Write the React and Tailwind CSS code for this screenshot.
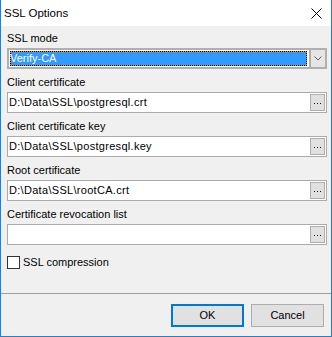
import React from "react";

function Ellipsis() {
  return (
    <div className="ml-auto mr-[1px] w-[15px] h-[17px] border border-[#adadad] bg-[#e1e1e1] flex items-center justify-center gap-[2px] pt-[1px]">
      <div className="w-[1px] h-[1px] bg-[#111]" />
      <div className="w-[1px] h-[1px] bg-[#111]" />
      <div className="w-[1px] h-[1px] bg-[#111]" />
    </div>
  );
}

function Field({ label, value }) {
  return (
    <div className="flex flex-col mt-[6px]">
      <div className="h-[15px] leading-[15px] text-black">{label}</div>
      <div className="mt-[2px] h-[21px] border border-[#ababab] bg-white flex items-center">
        <span className="pl-[1px] leading-[15px] text-black whitespace-pre tracking-[0.3px]">{value}</span>
        <Ellipsis />
      </div>
    </div>
  );
}

export default function App() {
  return (
    <div className="w-[332px] h-[337px] flex flex-col bg-[#f0f0f0] border-x border-b border-[#1883d7] font-['Liberation_Sans',Arial,sans-serif] text-[11px] text-black overflow-hidden">
      {/* Title bar */}
      <div className="h-[26px] bg-white flex items-center pl-[3px] pr-[9px] shrink-0">
        <span className="leading-[15px] text-[11.5px]">SSL Options</span>
        <svg className="ml-auto" width="11" height="11" viewBox="0 0 11 11">
          <path d="M0.5 0.5 L10.5 10.5 M10.5 0.5 L0.5 10.5" stroke="#000" strokeWidth="1" fill="none" />
        </svg>
      </div>

      {/* Body */}
      <div className="flex flex-col pl-[6px] pr-[4px] pt-[5px]">
        <div className="h-[15px] leading-[15px]">SSL mode</div>
        <div className="mt-[2px] h-[21px] border-2 border-[#b0b0b0] bg-white flex items-center">
          <div className="flex-1 ml-[1px] mr-[2px] h-[15px] bg-[#e08a2a]">
            <div className="h-full border border-dotted border-black bg-[#3399ff] bg-clip-padding flex items-center">
              <span className="text-white leading-[13px] -ml-[1px]">Verify-CA</span>
            </div>
          </div>
          <div className="w-[16px] h-full border-l-2 border-[#b0b0b0] bg-[#e6e6e6] flex items-center justify-center">
            <svg width="8" height="5" viewBox="0 0 8 5">
              <path d="M0.5 0.5 L4 4 L7.5 0.5" stroke="#606060" strokeWidth="1" fill="none" />
            </svg>
          </div>
        </div>

        <Field label="Client certificate" value="D:\Data\SSL\postgresql.crt" />
        <Field label="Client certificate key" value="D:\Data\SSL\postgresql.key" />
        <Field label="Root certificate" value="D:\Data\SSL\rootCA.crt" />
        <Field label="Certificate revocation list" value="" />

        <div className="mt-[11px] h-[13px] flex items-center">
          <div className="w-[13px] h-[13px] border border-[#333] bg-white" />
          <span className="ml-[3px] leading-[15px]">SSL compression</span>
        </div>
      </div>

      <div className="mt-[24px] h-[1px] bg-[#a0a0a0] shrink-0" />

      <div className="flex justify-end gap-[7px] pt-[10px] pr-[7px]">
        <div className="w-[73px] h-[23px] border-2 border-[#0078d7] bg-[#e1e1e1] flex items-center justify-center leading-[15px]">
          OK
        </div>
        <div className="w-[73px] h-[23px] border border-[#adadad] bg-[#e1e1e1] flex items-center justify-center leading-[15px]">
          Cancel
        </div>
      </div>
    </div>
  );
}
